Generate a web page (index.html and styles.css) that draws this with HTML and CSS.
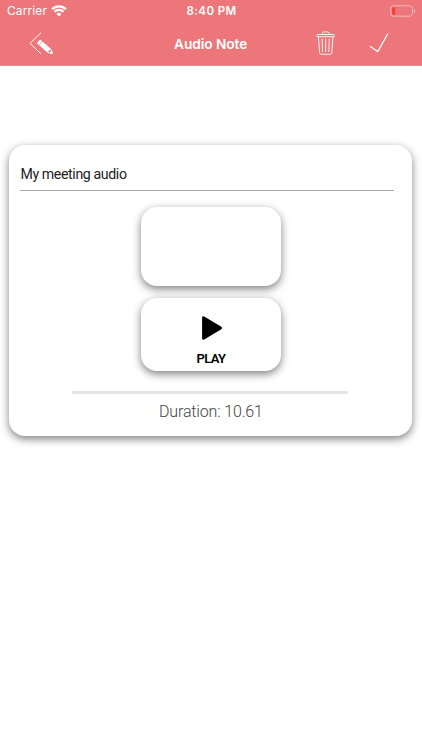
FILE: index.html
```
<!DOCTYPE html>
<html lang="en">
<head>
  <meta charset="UTF-8">
  <meta name="viewport" content="width=device-width, initial-scale=1">
  <title>Audio Note</title>
  <link rel="stylesheet" href="styles.css">
</head>
<body>
  <header class="header">
    <div class="status">
      <div class="carrier">
        <span class="carrier-name">Carrier</span>
        <svg class="wifi" width="16" height="12" viewBox="0 0 16 12">
          <path d="M1.1 4.2a9.8 9.8 0 0 1 13.8 0M3.5 6.8a6.4 6.4 0 0 1 9 0" fill="none" stroke="#fff" stroke-width="2.2"/>
          <path d="M8 11.4 5.5 8.9a3.6 3.6 0 0 1 5 0z" fill="#fff"/>
        </svg>
      </div>
      <span class="time">8:40 PM</span>
      <svg class="battery" width="26" height="12" viewBox="0 0 26 12">
        <rect x=".8" y=".8" width="21.7" height="10.4" rx="2.8" fill="none" stroke="#f6bdbf"/>
        <rect x="2.2" y="2.2" width="3" height="7.6" rx="1.2" fill="#fb3b30"/>
        <path d="M24 4v4c1.7-.7 1.7-3.3 0-4z" fill="#f6bdbf"/>
      </svg>
    </div>
    <nav class="nav">
      <svg class="back" width="26" height="24" viewBox="0 0 26 24">
        <path d="M12 .8 1 11.3l11 10.5" fill="none" stroke="#fff" stroke-width="1"/>
        <g transform="translate(9.4 9.3) rotate(41)" fill="#fff">
          <rect x="0" y="-2.6" width="2.8" height="5.2" rx="1"/>
          <rect x="3.2" y="-2.6" width="11" height="5.2"/>
          <path d="M14.2-2.3 18.4-.5v1l-4.2 1.8" fill="none" stroke="#fff" stroke-width=".8"/>
          <path d="M16-1.3 18.6-.5v1l-2.6.8z"/>
        </g>
      </svg>
      <h1 class="title">Audio Note</h1>
      <svg class="trash" width="20" height="26" viewBox="0 0 20 26" fill="none" stroke="#fff" stroke-width=".9">
        <path d="M6.4 3.5V2.2c0-.8.5-1.3 1.3-1.3h4c.8 0 1.3.5 1.3 1.3v1.3"/>
        <rect x="1" y="3.5" width="17.4" height="2.2" rx=".8"/>
        <path d="M2.4 5.7 3.6 21.5c.1 1.2.7 1.8 1.8 1.8H14c1.1 0 1.7-.6 1.8-1.8L17 5.7M6 7.7l.6 13.4M9.7 7.7v13.4M13.4 7.7l-.6 13.4"/>
      </svg>
      <svg class="check" width="21" height="22" viewBox="0 0 21 22">
        <path d="M1 13.3 8.8 18.6 19 .4" fill="none" stroke="#fff" stroke-width="1.2"/>
      </svg>
    </nav>
  </header>

  <main class="card">
    <div class="note-name">My meeting audio</div>
    <div class="box recorder"></div>
    <div class="box play">
      <svg width="22" height="26" viewBox="0 0 22 26">
        <path d="M2.5 2.6v20.8L19.6 13z" stroke="#000" stroke-width="2.8" stroke-linejoin="round"/>
      </svg>
      <span class="play-label">PLAY</span>
    </div>
    <div class="progress"></div>
    <div class="duration">Duration: 10.61</div>
  </main>
</body>
</html>
```
FILE: styles.css
```
* { box-sizing: border-box; }
body {
  margin: 0;
  min-height: 100vh;
  background: #fff;
  font-family: "Roboto", "Liberation Sans", sans-serif;
}
svg { display: block; flex: none; }
.header {
  height: 66px;
  background: #ec767a;
  border-bottom: 1px solid #e5898c;
  color: #fff;
  font-family: "Inter", "Liberation Sans", sans-serif;
}
.status {
  display: grid;
  grid-template-columns: 1fr auto 1fr;
  align-items: center;
  height: 21px;
  padding: 0 6px 0 7px;
  font-size: 12px;
}
.carrier {
  display: flex;
  align-items: center;
  gap: 4px;
}
.carrier-name { letter-spacing: 0.1px; }
.time { font-weight: 600; font-size: 11.5px; letter-spacing: 0.4px; }
.battery { justify-self: end; }
.nav {
  display: grid;
  grid-template-columns: 174px 142px 53px 1fr;
  align-items: center;
  height: 45px;
}
.back { margin-left: 29px; }
.title {
  margin: 0;
  font-size: 13.7px;
  font-weight: 600;
  letter-spacing: -0.05px;
  white-space: nowrap;
}
.card {
  display: flex;
  flex-direction: column;
  align-items: center;
  width: 403px;
  height: 291px;
  margin: 79px 0 0 9.4px;
  padding: 14px 18px 0 11px;
  border-radius: 16px;
  background: #fff;
  box-shadow: 0 3px 9px rgba(0, 0, 0, 0.5);
}
.note-name {
  width: 374px;
  height: 32px;
  border-bottom: 1px solid #aaa;
  color: #222;
  font-size: 14.2px;
  letter-spacing: -0.4px;
  line-height: 31px;
}
.box {
  width: 140px;
  margin-left: 7px;
  border-radius: 16px;
  background: #fff;
  box-shadow: 0 3px 8px rgba(0, 0, 0, 0.5);
}
.recorder {
  height: 79px;
  margin-top: 16px;
}
.play {
  display: flex;
  flex-direction: column;
  align-items: center;
  height: 73px;
  margin-top: 12px;
  padding-top: 17px;
}
.play svg { margin-left: 3px; }
.play-label {
  margin-top: 9px;
  font-size: 13px;
  font-weight: 600;
  letter-spacing: -0.7px;
  line-height: 17px;
}
.progress {
  width: 276px;
  height: 3px;
  margin: 20px 0 0 5px;
  border-radius: 2px;
  background: #e4e4e4;
}
.duration {
  margin: 8px 0 0 7px;
  color: #444;
  font-size: 16px;
  font-weight: 300;
  letter-spacing: -0.15px;
  line-height: 20px;
}
```
